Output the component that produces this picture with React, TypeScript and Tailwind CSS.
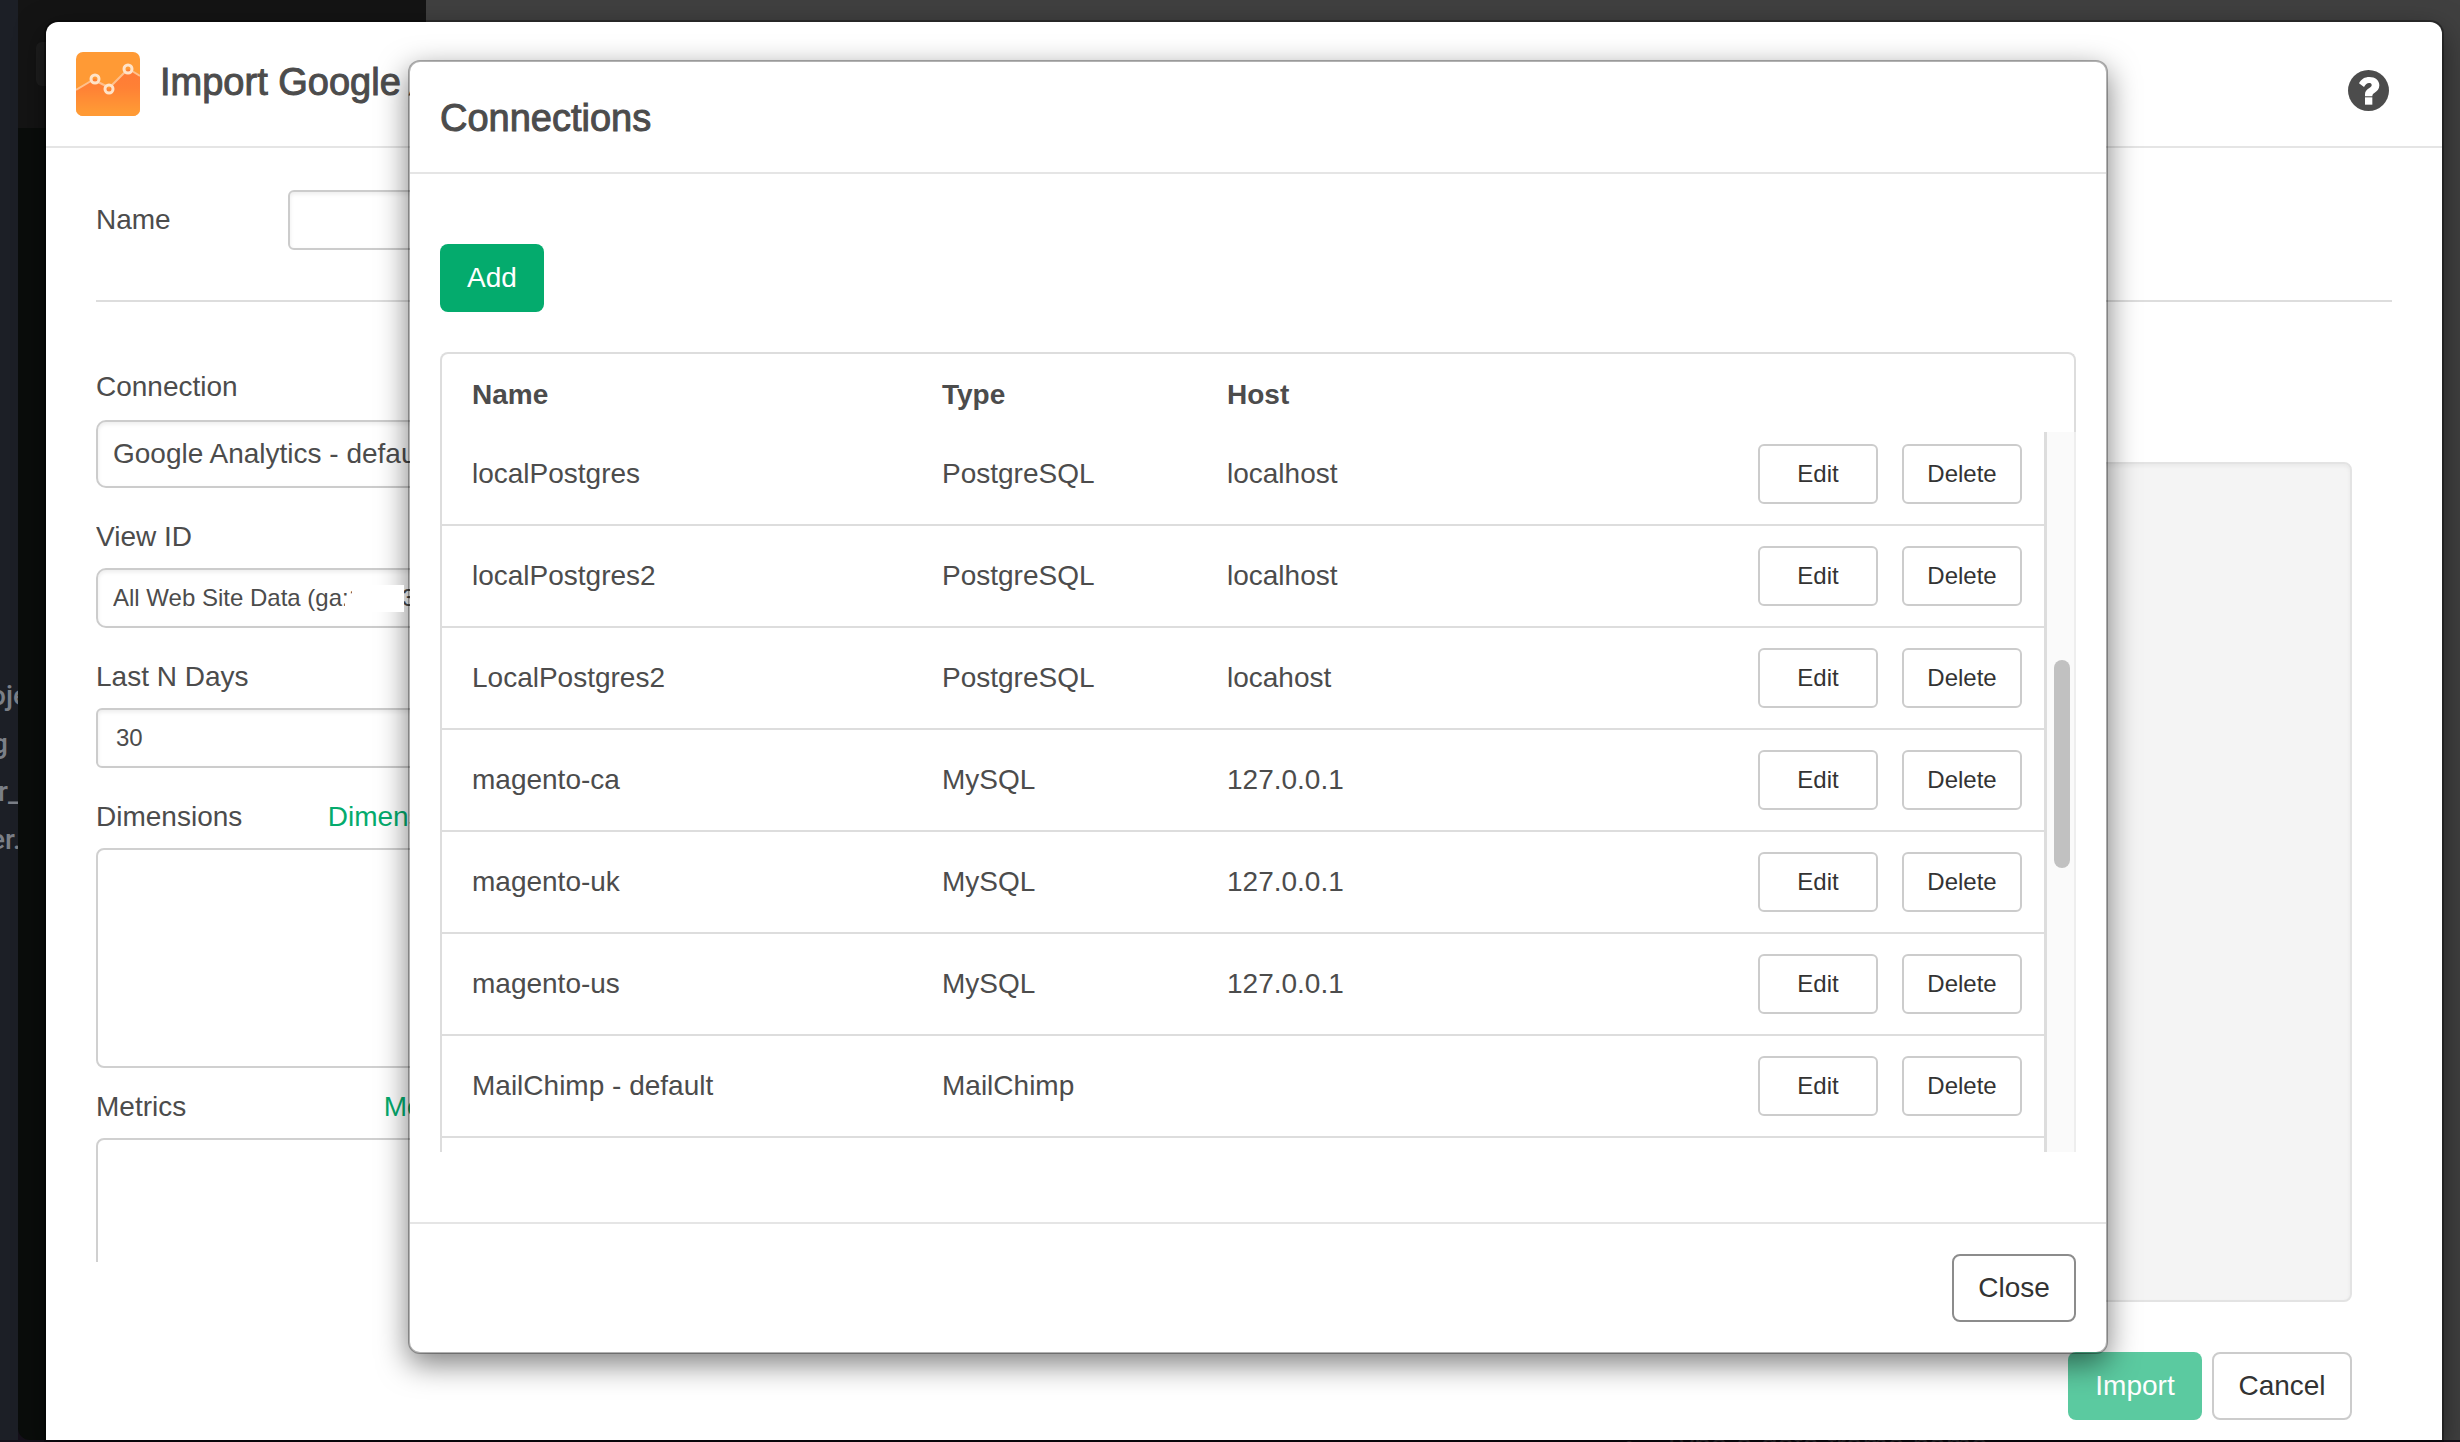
import React from "react";

type Connection = { name: string; type: string; host: string };

const connections: Connection[] = [
  { name: "localPostgres", type: "PostgreSQL", host: "localhost" },
  { name: "localPostgres2", type: "PostgreSQL", host: "localhost" },
  { name: "LocalPostgres2", type: "PostgreSQL", host: "locahost" },
  { name: "magento-ca", type: "MySQL", host: "127.0.0.1" },
  { name: "magento-uk", type: "MySQL", host: "127.0.0.1" },
  { name: "magento-us", type: "MySQL", host: "127.0.0.1" },
  { name: "MailChimp - default", type: "MailChimp", host: "" },
];

const inputShadow = "shadow-[inset_0_2px_4px_rgba(0,0,0,0.08)]";

function AnalyticsLogo() {
  return (
    <svg viewBox="0 0 64 64" className="size-16 shrink-0" aria-hidden="true">
      <defs>
        <linearGradient id="area" x1="0" y1="20" x2="0" y2="60" gradientUnits="userSpaceOnUse">
          <stop offset="0" stopColor="#ff7b36" />
          <stop offset="0.4" stopColor="#ff8135" />
          <stop offset="1" stopColor="#ff9a35" />
        </linearGradient>
        <clipPath id="tile">
          <rect width="64" height="64" rx="7" />
        </clipPath>
      </defs>
      <g clipPath="url(#tile)">
        <rect width="64" height="64" fill="#ff9a35" />
        <path d="M0 38 19 26.500 33 37 52 17 64 24V64H0Z" fill="url(#area)" />
        <path d="M0 38 15 29M22 30 30 34M36 33 49 20M56 19 64 24" fill="none" stroke="#ffc08c" strokeWidth="2" />
        <g fill="none" stroke="#ffe3c8" strokeWidth="3">
          <circle cx="19" cy="27" r="4" />
          <circle cx="33" cy="37" r="4" />
          <circle cx="52" cy="17" r="4" />
        </g>
      </g>
    </svg>
  );
}

function HelpIcon() {
  return (
    <svg viewBox="0 0 123 123" className="size-[41px]" aria-hidden="true">
      <circle cx="61.500" cy="61.500" r="61.500" fill="#4c4c4c" />
      <path
        d="M33 40C40 27 50 21 64 21 82 21 94 31 94 46 94 57 88 63 80 68 75 71 73 73 73 79H51V73C51 64 56 59 64 54 69 51 71 49 71 45 71 41 68 39 63 39 57 39 53 43 48 51Z"
        fill="#fff"
      />
      <rect x="51" y="82" width="22" height="22" fill="#fff" />
    </svg>
  );
}

function Backdrop() {
  return (
    <div className="flex h-full flex-col bg-[#15101a]" aria-hidden="true">
      <div className="flex min-h-0 flex-1">
        <div className="w-[18px] overflow-hidden bg-[#1c1f26] pt-[672px] font-['Roboto',sans-serif] font-medium text-[#7b7f87]">
          <div className="-ml-[10px] h-12 leading-[48px]">oje</div>
          <div className="-ml-[8px] h-12 leading-[48px]">g</div>
          <div className="-ml-[2px] h-12 leading-[48px]">r_</div>
          <div className="-ml-[10px] h-12 leading-[48px]">er.</div>
        </div>
        <div className="w-[408px] rounded-bl-xl bg-[#0a0d0b]">
          <div className="h-32 bg-[#141414] pt-[42px] pl-[18px]">
            <div className="h-11 rounded-md bg-[#1e1e1e]" />
          </div>
        </div>
        <div className="flex-1 bg-[#404040]" />
      </div>
      <div className="h-[2px] overflow-hidden pl-[1624px]">
        <div className="-mt-[10px] flex items-center gap-[28px] text-[30px] leading-[30px] text-[#4a464e]">
          <span>•</span>
          <span>Type a data frame name</span>
        </div>
      </div>
    </div>
  );
}

function ImportForm() {
  return (
    <form className="flex w-[378px] flex-col">
      <label htmlFor="connection" className="leading-[42px]">Connection</label>
      <select
        id="connection"
        className={`mt-3 h-[68px] appearance-none rounded-[10px] border-2 border-[#ccc] bg-white pl-[15px] ${inputShadow}`}
      >
        <option>Google Analytics - default</option>
      </select>

      <label htmlFor="view" className="mt-7 leading-[42px]">View ID</label>
      <div className="relative mt-[10px]">
        <select
          id="view"
          className={`block h-[60px] w-full appearance-none rounded-[10px] border-2 border-[#ccc] bg-white pl-[15px] text-2xl ${inputShadow}`}
        >
          <option>{"All Web Site Data (ga:1\u2007\u2007\u20073)"}</option>
        </select>
        <span className="absolute top-[17px] left-[256px] z-20 h-[27px] w-[52px] bg-white" />
        <span className="absolute top-[29px] left-[249px] z-20 h-[15px] w-2 bg-white" />
      </div>

      <label htmlFor="days" className="mt-7 leading-[42px]">Last N Days</label>
      <input
        id="days"
        defaultValue="30"
        className={`mt-[10px] h-[60px] rounded-md border-2 border-[#ccc] bg-white px-[18px] text-2xl ${inputShadow}`}
      />

      <div className="mt-7 flex justify-between leading-[42px]">
        <label htmlFor="dimensions">Dimensions</label>
        <a href="#dimensions" className="text-[#04ab6d]">Dimensions</a>
      </div>
      <textarea id="dimensions" className="mt-[10px] h-[220px] shrink-0 resize-none rounded-lg border-2 border-[#d0d0d0]" />

      <div className="mt-[18px] flex justify-between leading-[42px]">
        <label htmlFor="metrics">Metrics</label>
        <a href="#metrics" className="text-[#04ab6d]">Metrics</a>
      </div>
      <textarea id="metrics" className="mt-[10px] h-[220px] shrink-0 resize-none rounded-lg border-2 border-[#d0d0d0]" />
    </form>
  );
}

function ImportDialog() {
  return (
    <section className="flex h-full flex-col rounded-t-xl bg-white shadow-[0_10px_30px_rgba(0,0,0,0.5),0_0_0_2px_rgba(0,0,0,0.3)]">
      <header className="flex h-[126px] shrink-0 items-start border-b-2 border-[#e5e5e5] pt-[30px] pr-[53px] pl-[30px]">
        <AnalyticsLogo />
        <h1 className="ml-5 flex-1 text-[38px] leading-[60px] [-webkit-text-stroke:1px_#4c4c4c]">Import Google Analytics</h1>
        <button type="button" aria-label="Help" className="mt-[18px]">
          <HelpIcon />
        </button>
      </header>

      <div className="px-[50px]">
        <div className="flex items-center border-b-2 border-[#ddd] pt-[42px] pb-[50px]">
          <label htmlFor="name" className="w-48 leading-[42px]">Name</label>
          <input id="name" className={`h-[60px] w-[800px] rounded-md border-2 border-[#ccc] bg-white px-4 ${inputShadow}`} />
        </div>
      </div>

      <div className="flex min-h-0 flex-1 gap-8 pr-[90px] pl-[50px]">
        <div className="mb-10 overflow-hidden pt-16">
          <ImportForm />
        </div>
        <div className="mt-40 flex-1 rounded-lg border-2 border-[#e3e3e3] bg-[#f4f4f4] shadow-[inset_0_2px_4px_rgba(0,0,0,0.05)]" />
      </div>

      <footer className="flex justify-end gap-[10px] pt-[50px] pr-[90px] pb-5">
        <button type="button" className="h-[68px] w-[134px] rounded-lg bg-[#5bcaa0] text-white">Import</button>
        <button type="button" className="h-[68px] w-[140px] rounded-lg border-2 border-[#ccc] bg-white text-[#333]">Cancel</button>
      </footer>
    </section>
  );
}

function RowButton({ label }: { label: string }) {
  return (
    <button type="button" className="h-[60px] w-[120px] rounded-md border-2 border-[#ccc] bg-white text-2xl text-[#333]">
      {label}
    </button>
  );
}

function ConnectionsTable() {
  return (
    <div className="mt-10 flex h-[800px] rounded-t-lg border-2 border-b-0 border-[#ddd]">
      <div className="flex-1">
        <table className="w-full table-fixed border-collapse text-left">
          <thead>
            <tr className="h-[69px]">
              <th className="w-[470px] pt-3 pl-[30px] font-bold">Name</th>
              <th className="w-[285px] pt-3 pl-[30px] font-bold">Type</th>
              <th className="pt-3 pl-[30px] font-bold">Host</th>
              <th className="w-[320px]" aria-label="Actions" />
            </tr>
          </thead>
          <tbody>
            {connections.map((c) => (
              <tr key={c.name} className="h-[102px] border-b-2 border-[#ddd]">
                <td className="pl-[30px]">{c.name}</td>
                <td className="pl-[30px]">{c.type}</td>
                <td className="pl-[30px]">{c.host}</td>
                <td>
                  <div className="flex justify-end gap-6 pr-[22px]">
                    <RowButton label="Edit" />
                    <RowButton label="Delete" />
                  </div>
                </td>
              </tr>
            ))}
          </tbody>
        </table>
      </div>
      <div className="-mr-[2px] mt-[78px] w-8 border-r-2 border-l-[3px] border-r-[#eee] border-l-[#ddd] bg-[#fafafa] pt-[228px] pl-[7px]">
        <div className="h-[208px] w-4 rounded-full bg-[#c1c1c1]" />
      </div>
    </div>
  );
}

function ConnectionsDialog() {
  return (
    <section
      role="dialog"
      aria-label="Connections"
      className="flex w-[1700px] flex-col rounded-xl border-2 border-black/30 bg-white bg-clip-padding shadow-[0_10px_30px_rgba(0,0,0,0.5)]"
    >
      <header className="border-b-2 border-[#e5e5e5] px-[30px] pt-[26px] pb-6">
        <h2 className="text-[38px] leading-[60px] [-webkit-text-stroke:1px_#4c4c4c]">Connections</h2>
      </header>
      <div className="px-[30px] py-[70px]">
        <button type="button" className="block h-[68px] w-[104px] rounded-lg bg-[#04ab6d] text-white">Add</button>
        <ConnectionsTable />
      </div>
      <footer className="flex justify-end border-t-2 border-[#e5e5e5] p-[30px]">
        <button type="button" className="h-[68px] w-[124px] rounded-lg border-2 border-[#8c8c8c] bg-white text-[#333]">Close</button>
      </footer>
    </section>
  );
}

export default function App() {
  return (
    <main className="relative h-screen overflow-hidden font-['Liberation_Sans',Arial,sans-serif] text-[28px] text-[#4c4c4c]">
      <Backdrop />
      <div className="absolute inset-0 pt-[22px] pr-[18px] pb-[2px] pl-[46px]">
        <ImportDialog />
      </div>
      <div className="absolute inset-0 z-10 flex items-start justify-center pt-[60px] pl-14">
        <ConnectionsDialog />
      </div>
    </main>
  );
}
